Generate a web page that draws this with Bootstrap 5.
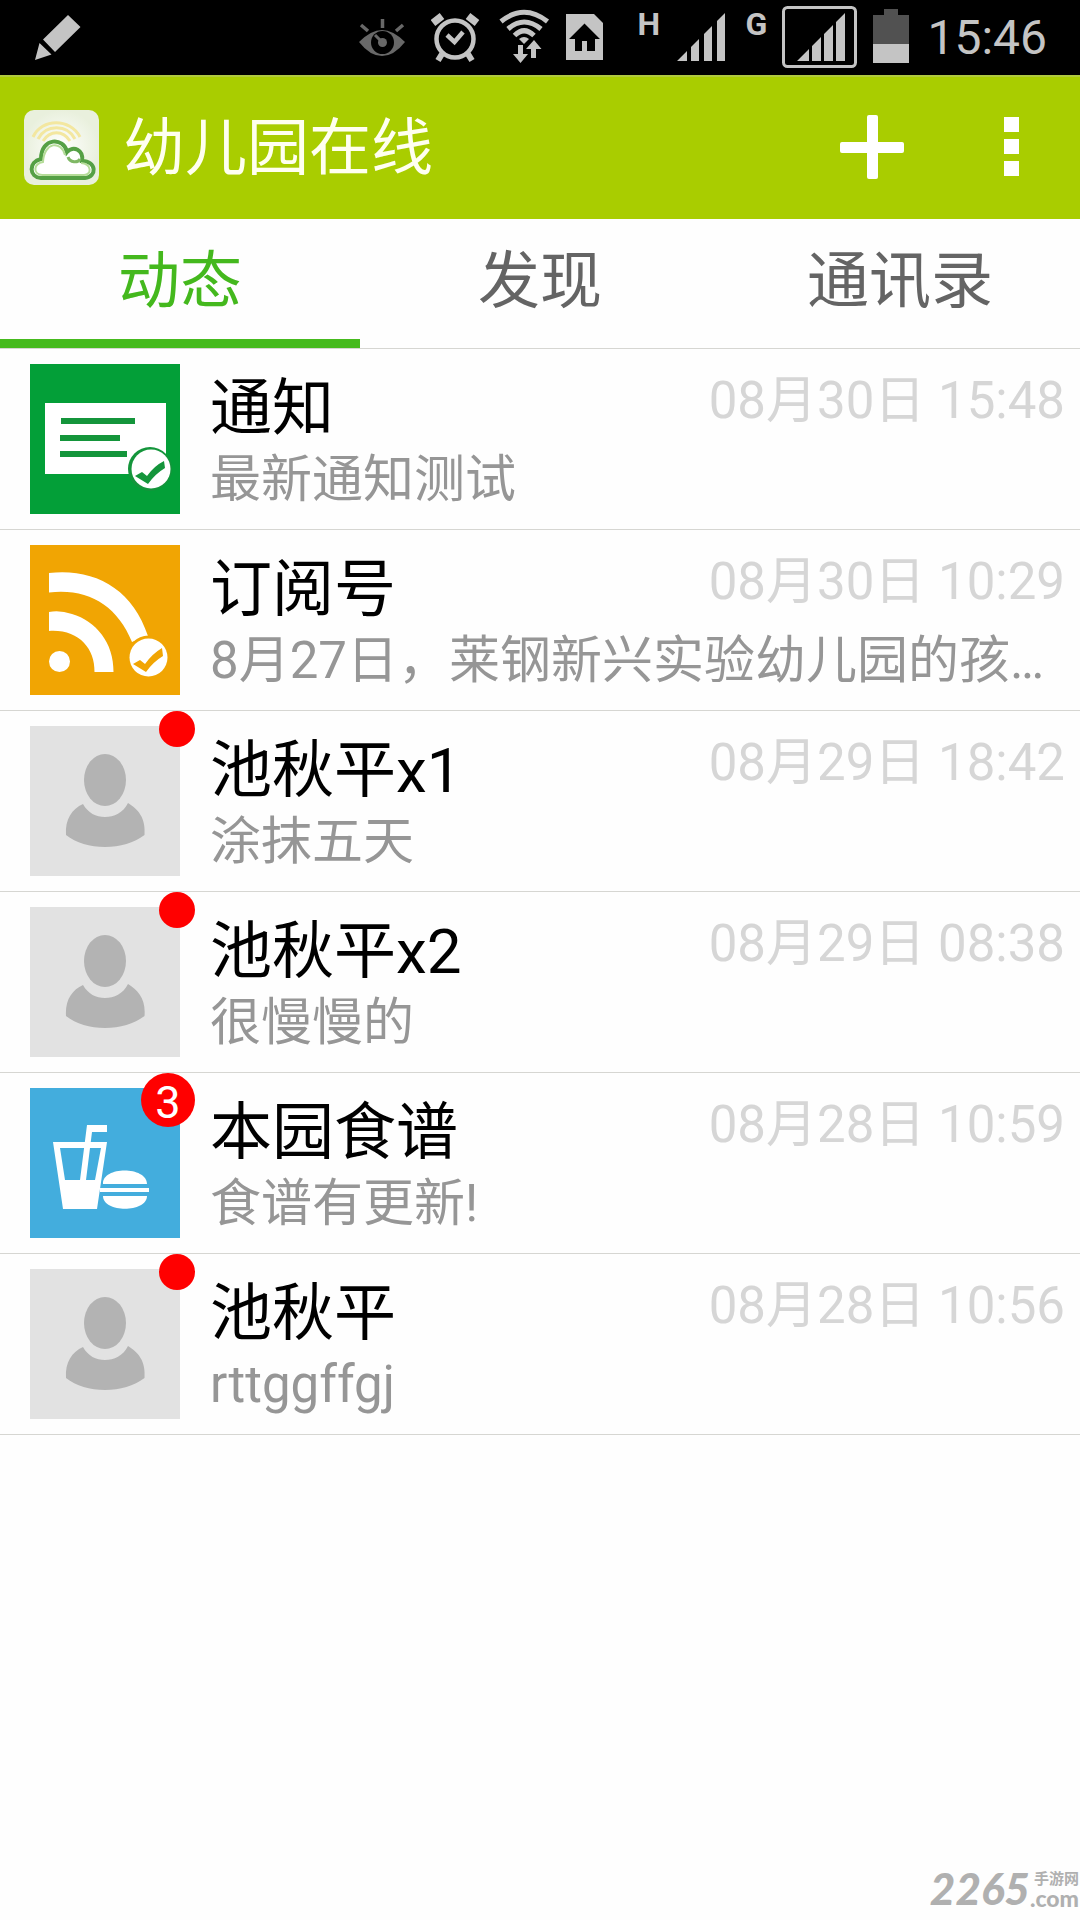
<!DOCTYPE html>
<html lang="zh-CN">
<head>
<meta charset="utf-8">
<meta name="viewport" content="width=device-width, initial-scale=1">
<title>幼儿园在线</title>
<link href="https://cdn.jsdelivr.net/npm/bootstrap@5.3.0/dist/css/bootstrap.min.css" rel="stylesheet">
<style>
  body { font-family: Roboto, "Noto Sans CJK SC", sans-serif; background: #fefefe; }
  svg { display: block; flex: none; }
  .status-bar { height: 75px; background: #000; color: #c4c4c4; padding: 0 33px 0 35px; gap: 16px; }
  .net-type { font-size: 32px; line-height: 32px; font-weight: 700; padding-top: 8px; width: 24px; }
  .net-type.second { width: 21px; }
  .clock { font-size: 48px; line-height: 75px; }
  .app-bar { height: 144px; background: #a9cd00; padding: 0 40px 0 24px; box-shadow: inset 0 2px #b0c93f; }
  .app-title { font-size: 62px; line-height: 80px; color: #fffff0; padding: 4px 0 0 24px; }
  .bar-btn { border: 0; background: none; padding: 0 21px; }
  .bar-btns { gap: 58px; }
  .tab-strip { border-bottom: 1px solid #d6d6d2; }
  .tab-strip .nav-link { font-size: 62px; line-height: 80px; color: #646464; padding: 23px 0 17px; border-bottom: 9px solid transparent; border-radius: 0; }
  .tab-strip .nav-link.active { color: #44b81d; border-bottom-color: #46ba1e; }
  .feed-item { border-bottom: 1px solid #d6d6d2; color: #000; gap: 15px; padding-right: 15px; }
  .thumb { padding: 15px 15px 15px 30px; }
  .count-dot { top: 0; right: 0; width: 36px; height: 36px; background: #f00; }
  .count-num { top: 0; right: 0; width: 54px; height: 54px; background: #f00; color: #fff; font-size: 45px; line-height: 60px; }
  .feed-text { min-width: 0; padding-top: 22px; }
  .feed-name { font-size: 62px; line-height: 76px; }
  .feed-date { font-size: 51px; line-height: 60px; color: #d6d6d6; }
  .feed-sub { font-size: 51px; line-height: 66px; color: #969696; }
  .site-mark { color: #b0b0b0; padding: 0 1px 12px; }
  .mark-num { font-size: 44px; line-height: 40px; font-weight: 900; font-style: italic; font-family: Lato, sans-serif; }
  .mark-cn { font-size: 15px; line-height: 17px; font-weight: 700; }
  .mark-com { font-size: 23px; line-height: 20px; font-weight: 900; font-family: Lato, sans-serif; }
</style>
</head>
<body>
<svg width="0" height="0" class="position-absolute" aria-hidden="true">
  <symbol id="person" viewBox="0 0 150 150">
    <rect width="150" height="150" fill="#e2e2e2"/>
    <ellipse cx="75" cy="54" rx="21" ry="26" fill="#b3b3b3"/>
    <path d="M53 78C58 87 66 91 75 91S93 87 98 77C108 83 116 92 114.500 109C104 117 90 121 75 121S46 117 36 109C35 93 42 83 53 78Z" fill="#b3b3b3"/>
  </symbol>
</svg>
<div class="d-flex flex-column min-vh-100">
  <div class="status-bar d-flex align-items-center">
    <svg class="me-auto" width="46" height="75" viewBox="35 0 46 75" fill="#c4c4c4"><path d="M68 15L80.500 27L55 52L43 39.500ZM39.500 43L51.500 54.500L35 60Z"/></svg>
    <svg width="56" height="75" viewBox="359 0 56 75" fill="none" stroke="#686868"><path d="M359 42Q371 30 382 30T405 42Q394 56 382 56T359 42Z" fill="#686868" stroke="none"/><circle cx="382.500" cy="42.500" r="11.500" fill="#000" stroke="none"/><circle cx="382.500" cy="42.500" r="4.500" fill="#686868" stroke="none"/><path d="M382.500 42.500L375 35" stroke-width="3"/><path d="M382.500 19V28M361 25L368 31M403 25L396 31" stroke-width="3.500"/></svg>
    <svg width="52" height="75" viewBox="431 0 52 75" fill="none" stroke="#c4c4c4"><circle cx="455" cy="39" r="18.500" stroke-width="4.500"/><path d="M447 35L454.500 42L463 32" stroke-width="4.500"/><path d="M442 54L438 60.500M468 54L472 60.500" stroke-width="6"/><path d="M433 23L442 16M477 23L468 16" stroke-width="7.500"/></svg>
    <svg width="51" height="75" viewBox="499 0 51 75" fill="none" stroke="#c4c4c4" stroke-width="5"><path d="M501 21.500Q524 3 547.500 21.500M508 29Q524 15 541 29M514.500 35.500Q524 26 534 35.500"/><path d="M519 39Q524 35 529 39L524 44Z" fill="#c4c4c4" stroke="none"/><path d="M518 45H523V54H528L520.500 63L513 54H518ZM531 58V49H526L534 40L541.500 49H536V58Z" fill="#c4c4c4" stroke="none"/></svg>
    <svg width="55" height="75" viewBox="566 0 55 75"><path d="M566 14H594L603 23V60H566Z" fill="#c4c4c4"/><path d="M584.500 23.500L600 39H595V51H587V41H582V51H575V39H569Z" fill="#000"/></svg>
    <span class="net-type align-self-start">H</span>
    <svg width="52" height="75" viewBox="677 0 52 75" fill="#c4c4c4"><path d="M677 61L687 51V61ZM691 61V47L699 39V61ZM704 61V34L712 26V61ZM717 61V21L725 13V61Z"/></svg>
    <span class="net-type second align-self-start">G</span>
    <svg width="75" height="75" viewBox="782 0 75 75" fill="#c4c4c4"><rect x="783.500" y="7.500" width="72" height="59" rx="4" fill="none" stroke="#c4c4c4" stroke-width="3"/><path d="M797 61L809 49V61ZM812 61V46L821 37V61ZM824 61V34L833 25V61ZM836 61V22L845 13V61Z"/></svg>
    <svg width="38" height="75" viewBox="873 0 38 75"><path d="M873 15H884V9H898V15H909V44H873Z" fill="#515151"/><path d="M873 44H909V63H873Z" fill="#c4c4c4"/></svg>
    <span class="clock">15:46</span>
  </div>

  <header class="app-bar d-flex align-items-center">
    <svg width="75" height="75" viewBox="0 0 75 75"><defs><radialGradient id="tile"><stop offset="0" stop-color="#fff"/><stop offset="1" stop-color="#e9f0dd"/></radialGradient></defs><rect width="75" height="75" rx="10" fill="url(#tile)"/><g fill="none" stroke="#f3e7a0" stroke-width="3"><path d="M9 27C18 8 46 8 56 27M14 29C22 14 43 14 51 29M19 31C26 20 39 20 46 31"/></g><path d="M17 68C5 67 4 52 17 49C17 27 40 27 43 42C49 35 60 40 58 51C73 51 73 67 61 68Z" fill="#fff" stroke="#55a045" stroke-width="4"/><path d="M18 65C9 64 9 54 19 52C20 32 37 30 41 45M57 53C68 54 68 65 60 65H18" fill="none" stroke="#b5dc98" stroke-width="2"/><path d="M44 47C46 53 54 53 56 49" fill="none" stroke="#7fb865" stroke-width="3"/></svg>
    <h1 class="app-title fw-normal mb-0 me-auto">幼儿园在线</h1>
    <div class="bar-btns d-flex">
      <button type="button" class="bar-btn" aria-label="添加"><svg width="64" height="64" viewBox="0 0 64 64" fill="#fff"><rect x="27" width="11" height="64" rx="2"/><rect y="27" width="64" height="11" rx="2"/></svg></button>
      <button type="button" class="bar-btn" aria-label="更多"><svg width="15" height="64" viewBox="0 0 15 64" fill="#fff"><path d="M0 2H15V17H0ZM0 24H15V39H0ZM0 46H15V61H0Z"/></svg></button>
    </div>
  </header>

  <nav class="tab-strip nav nav-justified flex-nowrap">
    <a class="nav-link active" aria-current="page" href="#">动态</a>
    <a class="nav-link" href="#">发现</a>
    <a class="nav-link" href="#">通讯录</a>
  </nav>

  <main>
    <a href="#" class="feed-item d-flex text-decoration-none">
      <div class="thumb position-relative"><svg width="150" height="150" viewBox="0 0 150 150"><rect width="150" height="150" fill="#039f38"/><rect x="15" y="39" width="121" height="71" fill="#fff"/><path d="M31 54H105V60H31ZM30 71H90V77H30ZM30 87H97V93H30Z" fill="#14953b"/><circle cx="120" cy="105" r="22" fill="#14953b"/><circle cx="121" cy="105" r="19.500" fill="#fff"/><path d="M105 112L112 108L117 112Q124 102 134 97L135 104Q125 110 118 120Z" fill="#14953b"/></svg></div>
      <div class="feed-text flex-fill">
        <div class="d-flex justify-content-between"><span class="feed-name">通知</span><time class="feed-date">08月30日 15:48</time></div>
        <div class="feed-sub">最新通知测试</div>
      </div>
    </a>
    <a href="#" class="feed-item d-flex text-decoration-none">
      <div class="thumb position-relative"><svg width="150" height="150" viewBox="0 0 150 150"><rect width="150" height="150" fill="#f1a503"/><g fill="#fff"><circle cx="29.500" cy="116.500" r="10.500"/><path d="M19 67Q30 65 42 69C66 76 84 98 83.500 127H64.500C65 103 48 84 19 86Z"/><path d="M19 28C64 23 102 43 118 91L102 97C87 60 58 43 19 47.500Z"/></g><circle cx="118.500" cy="112.500" r="22" fill="#f1a503"/><circle cx="118.500" cy="112.500" r="19" fill="#fff"/><path d="M103 119L110 115L115 119Q122 109 132 103L133 111Q123 117 116 127Z" fill="#f1a503"/></svg></div>
      <div class="feed-text flex-fill">
        <div class="d-flex justify-content-between"><span class="feed-name">订阅号</span><time class="feed-date">08月30日 10:29</time></div>
        <div class="feed-sub">8月27日，莱钢新兴实验幼儿园的孩…</div>
      </div>
    </a>
    <a href="#" class="feed-item d-flex text-decoration-none">
      <div class="thumb position-relative"><svg width="150" height="150"><use href="#person"/></svg><span class="count-dot position-absolute rounded-circle"></span></div>
      <div class="feed-text flex-fill">
        <div class="d-flex justify-content-between"><span class="feed-name">池秋平x1</span><time class="feed-date">08月29日 18:42</time></div>
        <div class="feed-sub">涂抹五天</div>
      </div>
    </a>
    <a href="#" class="feed-item d-flex text-decoration-none">
      <div class="thumb position-relative"><svg width="150" height="150"><use href="#person"/></svg><span class="count-dot position-absolute rounded-circle"></span></div>
      <div class="feed-text flex-fill">
        <div class="d-flex justify-content-between"><span class="feed-name">池秋平x2</span><time class="feed-date">08月29日 08:38</time></div>
        <div class="feed-sub">很慢慢的</div>
      </div>
    </a>
    <a href="#" class="feed-item d-flex text-decoration-none">
      <div class="thumb position-relative"><svg width="150" height="150" viewBox="0 0 150 150"><rect width="150" height="150" fill="#43addd"/><g fill="#fff"><path fill-rule="evenodd" d="M23 54H77L67 121H33ZM30 60L35 92H65L71 60Z"/><path d="M57 37H77V44H62L56 92H50Z"/><path d="M73 96C72 78 117 78 117 96ZM70 100H119V104H70ZM73 108H117C117 125 73 125 73 108Z"/></g></svg><span class="count-num position-absolute rounded-circle text-center">3</span></div>
      <div class="feed-text flex-fill">
        <div class="d-flex justify-content-between"><span class="feed-name">本园食谱</span><time class="feed-date">08月28日 10:59</time></div>
        <div class="feed-sub">食谱有更新!</div>
      </div>
    </a>
    <a href="#" class="feed-item d-flex text-decoration-none">
      <div class="thumb position-relative"><svg width="150" height="150"><use href="#person"/></svg><span class="count-dot position-absolute rounded-circle"></span></div>
      <div class="feed-text flex-fill">
        <div class="d-flex justify-content-between"><span class="feed-name">池秋平</span><time class="feed-date">08月28日 10:56</time></div>
        <div class="feed-sub">rttggffgj</div>
      </div>
    </a>
  </main>

  <footer class="site-mark d-flex justify-content-end align-items-end mt-auto">
    <span class="mark-num">2265</span>
    <span class="d-flex flex-column align-items-end"><span class="mark-cn">手游网</span><span class="mark-com">.com</span></span>
  </footer>
</div>
<script src="https://cdn.jsdelivr.net/npm/bootstrap@5.3.0/dist/js/bootstrap.bundle.min.js"></script>
</body>
</html>
